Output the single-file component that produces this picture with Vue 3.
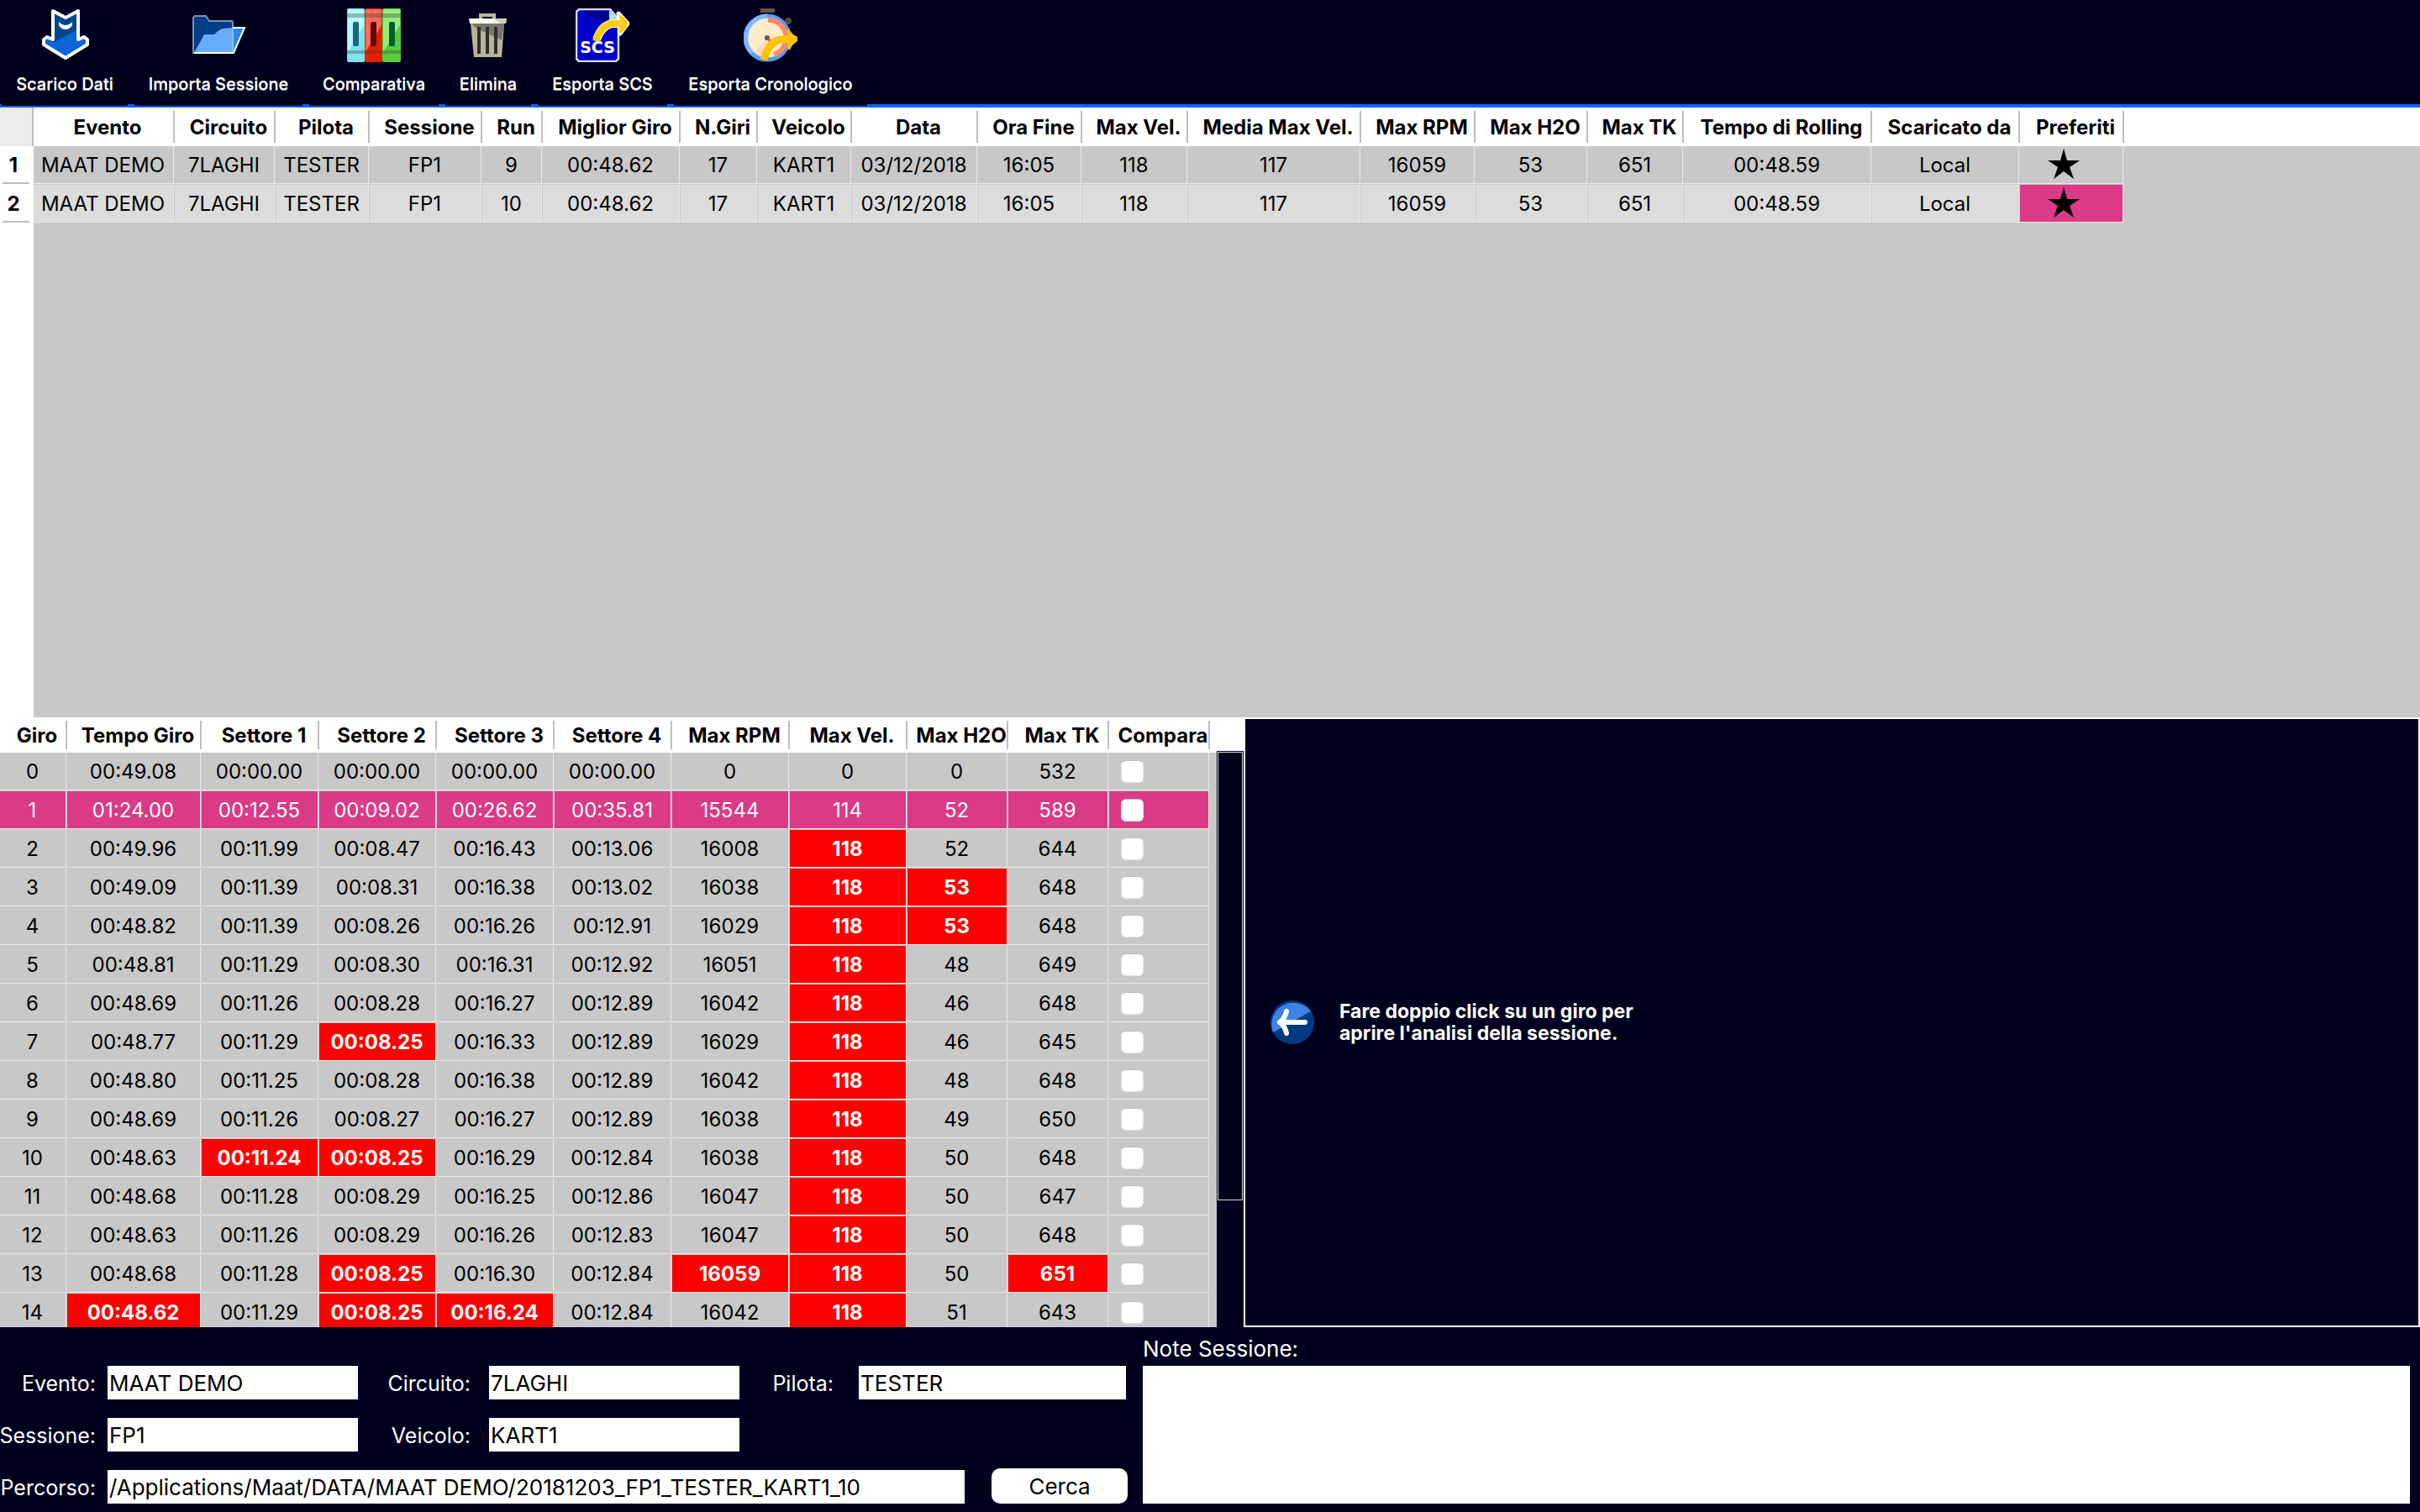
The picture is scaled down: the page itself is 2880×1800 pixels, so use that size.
<script setup>
import { ref } from 'vue'

const actions = [
  { id: 'download', label: 'Scarico Dati', width: 150 },
  { id: 'import', label: 'Importa Sessione', width: 200 },
  { id: 'compare', label: 'Comparativa', width: 154 },
  { id: 'delete', label: 'Elimina', width: 102 },
  { id: 'scs', label: 'Esporta SCS', width: 154 },
  { id: 'chrono', label: 'Esporta Cronologico', width: 230 },
]

const sessionColumns = [
  { label: 'Evento', width: 168 },
  { label: 'Circuito', width: 120 },
  { label: 'Pilota', width: 112 },
  { label: 'Sessione', width: 134 },
  { label: 'Run', width: 72 },
  { label: 'Miglior Giro', width: 164 },
  { label: 'N.Giri', width: 92 },
  { label: 'Veicolo', width: 112 },
  { label: 'Data', width: 150 },
  { label: 'Ora Fine', width: 124 },
  { label: 'Max Vel.', width: 126 },
  { label: 'Media Max Vel.', width: 206 },
  { label: 'Max RPM', width: 136 },
  { label: 'Max H2O', width: 134 },
  { label: 'Max TK', width: 114 },
  { label: 'Tempo di Rolling', width: 224 },
  { label: 'Scaricato da', width: 176 },
  { label: 'Preferiti', width: 124 },
]

const sessions = ['9', '10'].map((run) => [
  'MAAT DEMO', '7LAGHI', 'TESTER', 'FP1', run, '00:48.62', '17', 'KART1',
  '03/12/2018', '16:05', '118', '117', '16059', '53', '651', '00:48.59', 'Local',
])

const lapColumns = [
  { label: 'Giro', width: 80 },
  { label: 'Tempo Giro', width: 160 },
  { label: 'Settore 1', width: 140 },
  { label: 'Settore 2', width: 140 },
  { label: 'Settore 3', width: 140 },
  { label: 'Settore 4', width: 140 },
  { label: 'Max RPM', width: 140 },
  { label: 'Max Vel.', width: 140 },
  { label: 'Max H2O', width: 120 },
  { label: 'Max TK', width: 120 },
  { label: 'Compara', width: 120 },
]

const laps = [
  ['0', '00:49.08', '00:00.00', '00:00.00', '00:00.00', '00:00.00', '0', '0', '0', '532'],
  ['1', '01:24.00', '00:12.55', '00:09.02', '00:26.62', '00:35.81', '15544', '114', '52', '589'],
  ['2', '00:49.96', '00:11.99', '00:08.47', '00:16.43', '00:13.06', '16008', '118', '52', '644'],
  ['3', '00:49.09', '00:11.39', '00:08.31', '00:16.38', '00:13.02', '16038', '118', '53', '648'],
  ['4', '00:48.82', '00:11.39', '00:08.26', '00:16.26', '00:12.91', '16029', '118', '53', '648'],
  ['5', '00:48.81', '00:11.29', '00:08.30', '00:16.31', '00:12.92', '16051', '118', '48', '649'],
  ['6', '00:48.69', '00:11.26', '00:08.28', '00:16.27', '00:12.89', '16042', '118', '46', '648'],
  ['7', '00:48.77', '00:11.29', '00:08.25', '00:16.33', '00:12.89', '16029', '118', '46', '645'],
  ['8', '00:48.80', '00:11.25', '00:08.28', '00:16.38', '00:12.89', '16042', '118', '48', '648'],
  ['9', '00:48.69', '00:11.26', '00:08.27', '00:16.27', '00:12.89', '16038', '118', '49', '650'],
  ['10', '00:48.63', '00:11.24', '00:08.25', '00:16.29', '00:12.84', '16038', '118', '50', '648'],
  ['11', '00:48.68', '00:11.28', '00:08.29', '00:16.25', '00:12.86', '16047', '118', '50', '647'],
  ['12', '00:48.63', '00:11.26', '00:08.29', '00:16.26', '00:12.83', '16047', '118', '50', '648'],
  ['13', '00:48.68', '00:11.28', '00:08.25', '00:16.30', '00:12.84', '16059', '118', '50', '651'],
  ['14', '00:48.62', '00:11.29', '00:08.25', '00:16.24', '00:12.84', '16042', '118', '51', '643'],
]

// best value of each column, drawn on red
const best = ['', '00:48.62', '00:11.24', '00:08.25', '00:16.24', '', '16059', '118', '53', '651']

const selectedLap = ref('1')
const compared = ref([])
const form = ref({
  evento: 'MAAT DEMO',
  circuito: '7LAGHI',
  pilota: 'TESTER',
  sessione: 'FP1',
  veicolo: 'KART1',
  percorso: '/Applications/Maat/DATA/MAAT DEMO/20181203_FP1_TESTER_KART1_10',
  note: '',
})
</script>

<template>
  <div class="app">
    <nav class="toolbar">
      <button
        v-for="action in actions"
        :key="action.id"
        type="button"
        class="tool"
        :style="{ width: action.width + 'px' }"
      >
        <svg class="tool-icon" viewBox="0 0 64 64" aria-hidden="true">
          <g v-if="action.id === 'download'">
            <path d="M18 3 33 11 48 3V37L55 34 59 37V43L33 59 7 43V37L11 34 18 37Z" fill="#0d66d8" />
            <path d="M18 3 33 11 48 3V25L18 41Z" fill="#00468f" />
            <path d="M18 3 33 11 48 3V37L55 34 59 37V43L33 59 7 43V37L11 34 18 37Z" fill="none" stroke="#fff" stroke-width="4" stroke-linejoin="round" />
            <path d="M25 16Q29 20 33 20T41 16V20Q38 25 33 25T25 20Z" fill="#fff" />
          </g>
          <g v-else-if="action.id === 'import'">
            <path d="M2 53V11L4 9H17L21 15H48L49 17V53Z" fill="#003e88" stroke="#7d91b4" stroke-width="2" />
            <path d="M49 23H63L50 53H3L15 31H27Q34 24 38 24Z" fill="#67acff" />
            <path d="M49 23H63L50 53H49Z" fill="#3187ef" />
            <path d="M49 23H63L50 53H3" fill="none" stroke="#fff" stroke-width="2" />
            <path d="M49 24V52" stroke="#8fbef5" stroke-width="2" />
          </g>
          <g v-else-if="action.id === 'compare'">
            <rect x="0" y="0" width="21" height="64" rx="2" fill="#7ee3ef" />
            <rect x="21" y="0" width="21" height="64" rx="2" fill="#e71f00" />
            <rect x="42" y="0" width="22" height="64" rx="2" fill="#55cc3d" />
            <path d="M1 1H20V20L1 52Z" fill="#b8f8ff" />
            <path d="M22 1H41V20L22 52Z" fill="#ff6b55" />
            <path d="M43 1H63V20L43 52Z" fill="#97ec7e" />
            <path d="M0 6H64V11H0ZM0 50H64V54H0Z" fill="#30443c" opacity=".35" />
            <rect x="7" y="16" width="7" height="29" rx="2" fill="#17697b" />
            <rect x="28" y="16" width="7" height="29" rx="2" fill="#5a0410" />
            <rect x="50" y="16" width="7" height="29" rx="2" fill="#075d28" />
          </g>
          <g v-else-if="action.id === 'delete'">
            <path d="M23 13V8H39V13" fill="none" stroke="#b9b8a4" stroke-width="4" />
            <path d="M11 18H51L48 58H15Z" fill="#b5b4a0" />
            <path d="M12 18H51L48 38 17 23Z" fill="#77766a" />
            <path d="M19 22H23V54H19ZM29 22H33V54H29ZM39 22H43V54H39Z" fill="#302f27" />
            <path d="M9 12H54L53 18H10Z" fill="#fffef0" />
            <path d="M38 12H54L53 18H47Z" fill="#d0cfbd" />
          </g>
          <g v-else-if="action.id === 'scs'">
            <path d="M4 1H41L51 13V60L48 63H4L1 60V4Z" fill="#0000c8" stroke="#d9d9ea" stroke-width="2.5" />
            <path d="M5 3H39L48 24Z" fill="#000091" />
            <path d="M40 2V14H51Z" fill="#a8e5f1" />
            <path d="M25 37Q32 18 46 18H52" fill="none" stroke="#fff" stroke-width="10" />
            <path d="M51 6 62 18 53 30Z" fill="#fff" stroke="#fff" stroke-width="5" stroke-linejoin="round" />
            <path d="M24 39Q31 18 46 18H53" fill="none" stroke="#ffcd00" stroke-width="8" />
            <path d="M51 7Q60 11 62 18 61 25 53 30L51 25 54 18Z" fill="#ffcd00" />
            <text x="26" y="53" class="scs-text" text-anchor="middle">SCS</text>
          </g>
          <g v-else>
            <path d="M20 0H37V5H20Z" fill="#66554e" />
            <circle cx="53" cy="15" r="4" fill="#57483f" />
            <circle cx="28" cy="35" r="26" fill="#ffeccb" stroke="#529ffa" stroke-width="5" />
            <path d="M10 53A26 26 0 0 1 28 9" fill="none" stroke="#80b9ff" stroke-width="5" />
            <path d="M28 35 12 52A22 22 0 0 0 28 57Z" fill="#fbdcba" />
            <path d="M29 14A21 21 0 0 1 36 55" fill="none" stroke="#ff8a65" stroke-width="6" />
            <circle cx="28" cy="35" r="3" fill="#65565b" />
            <path d="M29 36 32 40" stroke="#ff4529" stroke-width="3" />
            <path d="M24 61Q31 37 46 37H56" fill="none" stroke="#ffc400" stroke-width="9" />
            <path d="M54 24Q56 30 64 34V39Q57 43 55 50L52 47V27Z" fill="#ffc400" />
          </g>
        </svg>
        <span class="tool-label">{{ action.label }}</span>
      </button>
    </nav>

    <section class="sessions">
      <table class="grid sessions-table">
        <colgroup>
          <col class="index-col" />
          <col v-for="col in sessionColumns" :key="col.label" :style="{ width: col.width + 'px' }" />
        </colgroup>
        <thead>
          <tr>
            <td class="corner"></td>
            <th v-for="col in sessionColumns" :key="col.label" scope="col">{{ col.label }}</th>
          </tr>
        </thead>
        <tbody>
          <tr v-for="(row, i) in sessions" :key="i" :class="{ alternate: i === 1 }">
            <th scope="row">{{ i + 1 }}</th>
            <td v-for="(value, j) in row" :key="j">{{ value }}</td>
            <td class="favourite" :class="{ selected: i === 1 }">
              <svg viewBox="0 0 38 36" aria-label="Preferito">
                <path d="M19 0 23 14H38L26 22 31 36 19 27 7 36 12 22 0 14H15Z" />
              </svg>
            </td>
          </tr>
        </tbody>
      </table>
    </section>

    <div class="middle">
      <section class="laps">
        <div class="laps-view">
          <table class="grid laps-table">
            <colgroup>
              <col v-for="col in lapColumns" :key="col.label" :style="{ width: col.width + 'px' }" />
            </colgroup>
            <thead>
              <tr>
                <th v-for="col in lapColumns" :key="col.label" scope="col">{{ col.label }}</th>
              </tr>
            </thead>
            <tbody>
              <tr
                v-for="lap in laps"
                :key="lap[0]"
                :class="{ selected: lap[0] === selectedLap }"
                @click="selectedLap = lap[0]"
              >
                <td v-for="(value, j) in lap" :key="j" :class="{ best: value === best[j] }">{{ value }}</td>
                <td class="compare-cell">
                  <input v-model="compared" type="checkbox" :value="lap[0]" :aria-label="'Compara giro ' + lap[0]" />
                </td>
              </tr>
            </tbody>
          </table>
        </div>
        <div class="scrollbar"><div class="thumb"></div></div>
      </section>

      <section class="analysis">
        <svg class="hint-icon" viewBox="0 0 52 52" aria-hidden="true">
          <circle cx="26" cy="26" r="26" fill="#003a83" />
          <path d="M3 38A26 26 0 0 1 48 13Z" fill="#3c83e4" />
          <path d="M11 26H41" fill="none" stroke="#fff" stroke-width="6" stroke-linecap="round" />
          <path d="M19 13Q17 22 11 26 17 30 19 39" fill="none" stroke="#fff" stroke-width="6" stroke-linecap="round" stroke-linejoin="round" />
        </svg>
        <p>Fare doppio click su un giro per<br />aprire l'analisi della sessione.</p>
      </section>
    </div>

    <footer class="details">
      <form class="fields" @submit.prevent>
        <div class="field-grid">
          <label for="evento">Evento:</label>
          <input id="evento" v-model="form.evento" type="text" />
          <label for="circuito" class="second">Circuito:</label>
          <input id="circuito" v-model="form.circuito" type="text" />
          <label for="pilota" class="third">Pilota:</label>
          <input id="pilota" v-model="form.pilota" type="text" />
          <label for="sessione">Sessione:</label>
          <input id="sessione" v-model="form.sessione" type="text" />
          <label for="veicolo" class="second">Veicolo:</label>
          <input id="veicolo" v-model="form.veicolo" type="text" />
        </div>
        <div class="path-row">
          <label for="percorso">Percorso:</label>
          <input id="percorso" v-model="form.percorso" type="text" />
          <button type="submit">Cerca</button>
        </div>
      </form>
      <div class="notes">
        <label for="note">Note Sessione:</label>
        <textarea id="note" v-model="form.note"></textarea>
      </div>
    </footer>
  </div>
</template>

<style>
body {
  margin: 0;
  background: #00001e;
}
</style>

<style scoped>
.app {
  display: flex;
  flex-direction: column;
  height: 100vh;
  overflow: hidden;
  color: #000000;
  background: #00001e;
  font-family: Inter, "Liberation Sans", sans-serif;
  font-size: 24px;
}

.app * {
  box-sizing: border-box;
}

.toolbar {
  display: flex;
  flex: none;
  gap: 8px;
  height: 128px;
  padding-left: 2px;
  background: linear-gradient(#00001e 124px, #0064ff 124px);
}

.tool {
  display: flex;
  flex-direction: column;
  align-items: center;
  gap: 14px;
  height: 126px;
  padding: 10px 0 0;
  color: #ffffff;
  background: #00001e;
  border: 0;
  font-family: inherit;
  font-size: 20px;
  font-weight: 500;
  line-height: 24px;
  white-space: nowrap;
}

.tool-icon {
  flex: none;
  width: 64px;
  height: 64px;
}

.tool-label {
  text-shadow: 0 1px 0 #8c8c96;
}

.scs-text {
  fill: #ffffff;
  font: bold 19px "DejaVu Sans", sans-serif;
}

.grid {
  border-collapse: separate;
  border-spacing: 0;
  table-layout: fixed;
}

.grid td,
.grid th {
  padding: 0;
  text-align: center;
  white-space: nowrap;
  line-height: 28px;
}

.grid thead th {
  padding: 2px 0 0 8px;
  background: linear-gradient(#bebebe, #bebebe) right center / 2px calc(100% - 8px) no-repeat #ffffff;
  font-weight: 700;
}

.grid tbody td {
  height: 46px;
  padding-right: 2px;
  background: #c8c8c8;
  border-right: 1px solid #c8c8c8;
  border-bottom: 1px solid #c8c8c8;
  box-shadow: inset -1px -1px 0 #e9e9e9;
}

.sessions {
  flex: 1;
  min-height: 0;
  overflow: hidden;
  background: linear-gradient(#ffffff, #ffffff) top / 100% 46px no-repeat,
    linear-gradient(to right, #ffffff 40px, #c8c8c8 40px);
}

.sessions-table {
  width: 2528px;
}

.index-col {
  width: 40px;
}

.sessions-table thead tr {
  height: 46px;
}

.sessions-table .corner {
  background: #ececec;
  border-right: 2px solid #bebebe;
}

.sessions-table tbody th {
  padding-right: 8px;
  background: linear-gradient(#bebebe, #bebebe) 3px 43px / 32px 2px no-repeat #ffffff;
}

.sessions-table .alternate td {
  background: #dcdcdc;
}

.sessions-table .favourite {
  padding: 0 20px 4px 0;
}

.favourite svg {
  display: block;
  width: 38px;
  height: 36px;
  margin: 0 auto;
}

.sessions-table .favourite.selected {
  background: #db3a86;
}

.middle {
  display: grid;
  flex: 1;
  grid-template-columns: 1480px 1fr;
  min-height: 0;
}

.laps {
  display: flex;
  min-height: 0;
  background: #ffffff;
}

.laps-view {
  width: 1448px;
  overflow: hidden;
  background: linear-gradient(#ffffff 42px, #c8c8c8 42px);
}

.laps-table {
  width: 1440px;
}

.laps-table thead tr {
  height: 42px;
}

.laps-table .selected td {
  color: #ffffff;
  background: #db3a86;
}

.laps-table .best {
  color: #ffffff;
  background: #ff0000;
  font-weight: 700;
}

.laps-table .compare-cell {
  padding-left: 14px;
  text-align: left;
}

.compare-cell input {
  display: block;
  width: 27px;
  height: 27px;
  margin: 0;
  background: #ffffff;
  border: 1px solid #e4e4e4;
  border-top-color: #bcbcbc;
  border-radius: 6px;
  appearance: none;
}

.compare-cell input:checked {
  background: #0064ff;
}

.scrollbar {
  flex: 1;
  margin-top: 40px;
  padding: 1px;
  background: #00001e;
}

.thumb {
  height: 78%;
  border: 1px solid #d8d8d8;
}

.analysis {
  display: flex;
  align-items: center;
  gap: 30px;
  padding-left: 30px;
  color: #ffffff;
  border: 2px solid #ffffff;
}

.hint-icon {
  width: 52px;
  height: 52px;
}

.analysis p {
  margin: 0;
  font-size: 23px;
  font-weight: 700;
  line-height: 26px;
}

.details {
  display: grid;
  flex: none;
  grid-template-columns: 1342px 1fr;
  gap: 18px;
  padding: 0 12px 10px 0;
  color: #ffffff;
  font-size: 26px;
}

.details input,
.details textarea {
  color: #000000;
  background: #ffffff;
  border: 0;
  border-radius: 0;
  font: inherit;
}

.details input {
  width: 100%;
  height: 40px;
  padding: 0 2px;
}

.fields {
  display: flex;
  flex-direction: column;
  gap: 22px;
  padding-top: 46px;
}

.fields label {
  display: flex;
  align-items: center;
  justify-content: flex-end;
  padding: 2px 14px 0 0;
  font-size: 25px;
}

.fields label.second {
  padding-right: 22px;
}

.fields label.third {
  padding-right: 30px;
}

.field-grid {
  display: grid;
  grid-template-columns: 128px 298px 156px 298px 142px 318px;
  gap: 22px 0;
}

.path-row {
  display: grid;
  grid-template-columns: 128px 1fr 162px;
  height: 40px;
}

.path-row input {
  width: calc(100% - 32px);
}

.path-row button {
  height: 42px;
  margin-top: -2px;
  padding: 0;
  color: #000000;
  background: #ffffff;
  border: 0;
  border-radius: 10px;
  font: inherit;
}

.notes {
  display: flex;
  flex-direction: column;
}

.notes label {
  padding: 8px 0 2px;
  line-height: 36px;
}

.notes textarea {
  display: block;
  flex: 1;
  width: 100%;
  padding: 4px;
  resize: none;
}
</style>
